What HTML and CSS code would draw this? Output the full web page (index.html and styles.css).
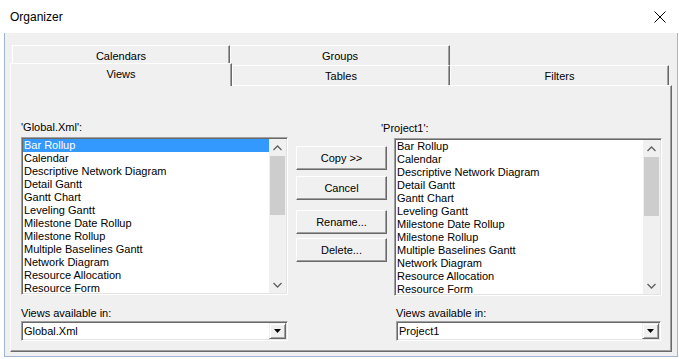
FILE: index.html
```html
<!DOCTYPE html>
<html lang="en">
<head>
    <meta charset="UTF-8">
    <title>Organizer</title>
    <link rel="stylesheet" href="styles.css">
</head>
<body>
    <div class="window">
        <div class="titlebar">
            <span class="title">Organizer</span>
            <svg class="close" width="12" height="12" viewBox="0 0 12 12">
                <path d="M0.5 0.5 L11.5 11.5 M11.5 0.5 L0.5 11.5" stroke="#000" stroke-width="1" fill="none"/>
            </svg>
        </div>
        <div class="client">
            <div class="tabs">
                <div class="tab-row back">
                    <div class="tab calendars">Calendars</div>
                    <div class="tab groups">Groups</div>
                </div>
                <div class="tab-row front">
                    <div class="tab active views">Views</div>
                    <div class="tab tables">Tables</div>
                    <div class="tab filters">Filters</div>
                </div>
                <div class="panel">
                    <div class="col">
                        <div class="caption">'Global.Xml':</div>
                        <div class="listbox">
                            <ul class="items">
                                <li class="selected">Bar Rollup</li>
                                <li>Calendar</li>
                                <li>Descriptive Network Diagram</li>
                                <li>Detail Gantt</li>
                                <li>Gantt Chart</li>
                                <li>Leveling Gantt</li>
                                <li>Milestone Date Rollup</li>
                                <li>Milestone Rollup</li>
                                <li>Multiple Baselines Gantt</li>
                                <li>Network Diagram</li>
                                <li>Resource Allocation</li>
                                <li>Resource Form</li>
                            </ul>
                            <div class="scrollbar">
                                <div class="arrow">
                                    <svg width="9" height="6" viewBox="0 0 9 6"><path d="M0.5 5 L4.5 1 L8.5 5" stroke="#606060" stroke-width="1.3" fill="none"/></svg>
                                </div>
                                <div class="track"><div class="thumb"></div></div>
                                <div class="arrow">
                                    <svg width="9" height="6" viewBox="0 0 9 6"><path d="M0.5 1 L4.5 5 L8.5 1" stroke="#606060" stroke-width="1.3" fill="none"/></svg>
                                </div>
                            </div>
                        </div>
                        <div class="caption lower">Views available in:</div>
                        <div class="combo">
                            <span class="combo-text">Global.Xml</span>
                            <div class="drop">
                                <svg width="7" height="4" viewBox="0 0 7 4"><path d="M0 0 H7 L3.5 4 Z" fill="#000"/></svg>
                            </div>
                        </div>
                    </div>

                    <div class="buttons">
                        <button class="btn copy">Copy &gt;&gt;</button>
                        <button class="btn cancel">Cancel</button>
                        <button class="btn rename">Rename...</button>
                        <button class="btn delete">Delete...</button>
                    </div>

                    <div class="col right">
                        <div class="caption">'Project1':</div>
                        <div class="listbox">
                            <ul class="items">
                                <li>Bar Rollup</li>
                                <li>Calendar</li>
                                <li>Descriptive Network Diagram</li>
                                <li>Detail Gantt</li>
                                <li>Gantt Chart</li>
                                <li>Leveling Gantt</li>
                                <li>Milestone Date Rollup</li>
                                <li>Milestone Rollup</li>
                                <li>Multiple Baselines Gantt</li>
                                <li>Network Diagram</li>
                                <li>Resource Allocation</li>
                                <li>Resource Form</li>
                            </ul>
                            <div class="scrollbar">
                                <div class="arrow">
                                    <svg width="9" height="6" viewBox="0 0 9 6"><path d="M0.5 5 L4.5 1 L8.5 5" stroke="#606060" stroke-width="1.3" fill="none"/></svg>
                                </div>
                                <div class="track"><div class="thumb"></div></div>
                                <div class="arrow">
                                    <svg width="9" height="6" viewBox="0 0 9 6"><path d="M0.5 1 L4.5 5 L8.5 1" stroke="#606060" stroke-width="1.3" fill="none"/></svg>
                                </div>
                            </div>
                        </div>
                        <div class="caption lower">Views available in:</div>
                        <div class="combo">
                            <span class="combo-text">Project1</span>
                            <div class="drop">
                                <svg width="7" height="4" viewBox="0 0 7 4"><path d="M0 0 H7 L3.5 4 Z" fill="#000"/></svg>
                            </div>
                        </div>
                    </div>
                </div>
            </div>
        </div>
    </div>
</body>
</html>
```

FILE: styles.css
```css
:root {
    --face: #f0f0f0;
    --light: #ffffff;
    --shadow: #a0a0a0;
    --dark: #696969;
    --frame: #9fb5d2;
    --select: #3399ff;
    --ui-font: 'Liberation Sans', Arial, sans-serif;
}
html, body {
    margin: 0;
    padding: 0;
    background: #fff;
    font-family: var(--ui-font);
    font-size: 11px;
    color: #000;
}
.window {
    width: 679px;
    height: 359px;
    background: #fff;
    box-sizing: border-box;
}
.titlebar {
    height: 33px;
    display: flex;
    align-items: center;
    justify-content: space-between;
    padding: 0 13px 0 10px;
    box-sizing: border-box;
}
.title {
    font-size: 12px;
    margin-top: 1px;
}
.close {
    display: block;
    margin-top: 1px;
}
.client {
    margin-left: 4px;
    width: 674px;
    height: 324px;
    background: var(--face);
    border: 1px solid var(--frame);
    border-top: none;
    box-sizing: border-box;
    padding-top: 12px;
    padding-left: 5px;
}
.tabs {
    width: 662px;
}
/* tab strip: two rows, the back row sits behind the front one */
.tab-row {
    display: flex;
    height: 20px;
}
.tab-row.back {
    padding-left: 2px;
}
.tab {
    box-sizing: border-box;
    height: 20px;
    display: flex;
    align-items: center;
    justify-content: center;
    border-top: 1px solid var(--light);
    border-left: 1px solid var(--light);
    border-right: 1px solid var(--dark);
    box-shadow: inset -1px 0 0 var(--shadow);
    background: var(--face);
    padding-top: 1px;
}
.calendars { width: 218px; }
.groups { width: 220px; }
.views { width: 222px; }
.tables { width: 218px; }
.filters { width: 219px; }
.tab.active {
    height: 23px;
    margin-top: -2px;
    margin-bottom: -1px;
    position: relative;
    z-index: 1;
    align-items: flex-start;
    padding-top: 4px;
}
.panel {
    box-sizing: border-box;
    width: 662px;
    height: 267px;
    border-top: 1px solid var(--light);
    border-left: 1px solid var(--light);
    border-right: 1px solid var(--dark);
    border-bottom: 1px solid var(--dark);
    box-shadow: inset -1px -1px 0 var(--shadow);
    padding: 35px 0 0 10px;
    display: grid;
    grid-template-columns: 267px 91px 267px;
    column-gap: 8px;
    align-items: start;
}
.panel .right {
    margin-left: -1px;
}
.col {
    display: flex;
    flex-direction: column;
}
.caption {
    height: 13px;
    line-height: 13px;
    white-space: nowrap;
}
.right .caption:first-child {
    margin-left: -13px;
    margin-top: 1px;
}
.caption.lower {
    margin-top: 12px;
}
.right .caption.lower {
    margin-top: 11px;
    margin-left: 2px;
}
/* sunken list and combo frames */
.listbox, .combo {
    box-sizing: border-box;
    background: #fff;
    border-top: 1px solid var(--shadow);
    border-left: 1px solid var(--shadow);
    border-right: 1px solid var(--light);
    border-bottom: 1px solid var(--light);
    box-shadow: inset 1px 1px 0 var(--dark), inset -1px -1px 0 #e3e3e3;
    padding: 1px;
}
.listbox {
    margin-top: 3px;
    height: 158px;
    display: flex;
    overflow: hidden;
}
.items {
    list-style: none;
    margin: 0;
    padding: 0;
    flex: 1;
    overflow: hidden;
}
.items li {
    height: 13px;
    line-height: 13px;
    padding-left: 1px;
    white-space: nowrap;
}
.items li.selected {
    background: var(--select);
    color: #fff;
}
.scrollbar {
    width: 17px;
    display: flex;
    flex-direction: column;
    background: var(--face);
}
.arrow {
    height: 17px;
    display: flex;
    align-items: center;
    justify-content: center;
}
.track {
    flex: 1;
    padding: 0 1px;
}
.thumb {
    height: 59px;
    background: #cdcdcd;
}
.buttons {
    display: flex;
    flex-direction: column;
    padding-top: 25px;
}
.btn {
    box-sizing: border-box;
    height: 24px;
    width: 91px;
    padding: 0;
    font-family: var(--ui-font);
    font-size: 11px;
    color: #000;
    background: var(--face);
    border-top: 1px solid var(--light);
    border-left: 1px solid var(--light);
    border-right: 1px solid var(--dark);
    border-bottom: 1px solid var(--dark);
    box-shadow: inset -1px -1px 0 var(--shadow);
}
.btn.cancel { margin-top: 6px; }
.btn.rename { margin-top: 10px; }
.btn.delete { margin-top: 4px; }
.combo {
    margin-top: 1px;
    height: 20px;
    display: flex;
    align-items: center;
}
.right .combo {
    margin-left: 2px;
    width: 265px;
}
.combo-text {
    flex: 1;
    padding-left: 1px;
}
.drop {
    width: 17px;
    height: 16px;
    box-sizing: border-box;
    display: flex;
    align-items: center;
    justify-content: center;
    background: var(--face);
    border-top: 1px solid var(--face);
    border-left: 1px solid var(--face);
    border-right: 1px solid var(--dark);
    border-bottom: 1px solid var(--dark);
    box-shadow: inset 1px 1px 0 var(--light), inset -1px -1px 0 var(--shadow);
}
```
